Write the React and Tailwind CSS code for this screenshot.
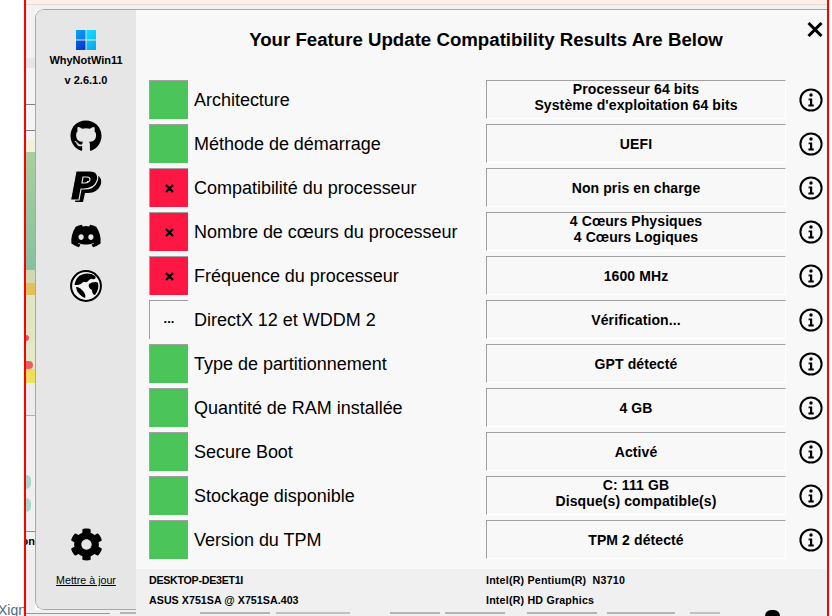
import React from 'react';
import { FaGithub, FaDiscord, FaCog } from 'react-icons/fa';

const rows = [
  { label: 'Architecture', status: 'ok', value: ['Processeur 64 bits', "Système d'exploitation 64 bits"] },
  { label: 'Méthode de démarrage', status: 'ok', value: ['UEFI'] },
  { label: 'Compatibilité du processeur', status: 'fail', value: ['Non pris en charge'] },
  { label: 'Nombre de cœurs du processeur', status: 'fail', value: ['4 Cœurs Physiques', '4 Cœurs Logiques'] },
  { label: 'Fréquence du processeur', status: 'fail', value: ['1600 MHz'] },
  { label: 'DirectX 12 et WDDM 2', status: 'wait', value: ['Vérification...'] },
  { label: 'Type de partitionnement', status: 'ok', value: ['GPT détecté'] },
  { label: 'Quantité de RAM installée', status: 'ok', value: ['4 GB'] },
  { label: 'Secure Boot', status: 'ok', value: ['Activé'] },
  { label: 'Stockage disponible', status: 'ok', value: ['C: 111 GB', 'Disque(s) compatible(s)'] },
  { label: 'Version du TPM', status: 'ok', value: ['TPM 2 détecté'] },
];

const Win11Logo = () => (
  <svg width="20" height="20" viewBox="0 0 20 20">
    <defs>
      <linearGradient id="tl" x1="0" y1="0" x2="1" y2="1">
        <stop offset="0" stopColor="#0aa0f5" />
        <stop offset="1" stopColor="#0a78e8" />
      </linearGradient>
      <linearGradient id="tr" x1="0" y1="0" x2="1" y2="1">
        <stop offset="0" stopColor="#10e0fb" />
        <stop offset="1" stopColor="#0cc0f6" />
      </linearGradient>
      <linearGradient id="bl" x1="0" y1="0" x2="1" y2="1">
        <stop offset="0" stopColor="#0a5ce0" />
        <stop offset="1" stopColor="#0038c8" />
      </linearGradient>
      <linearGradient id="br" x1="0" y1="0" x2="1" y2="1">
        <stop offset="0" stopColor="#10c8f6" />
        <stop offset="1" stopColor="#0aa0ee" />
      </linearGradient>
    </defs>
    <rect x="0" y="0" width="9.5" height="9.5" fill="url(#tl)" />
    <rect x="10.5" y="0" width="9.5" height="9.5" fill="url(#tr)" />
    <rect x="0" y="10.5" width="9.5" height="9.5" fill="url(#bl)" />
    <rect x="10.5" y="10.5" width="9.5" height="9.5" fill="url(#br)" />
  </svg>
);

const PaypalIcon = () => (
  <svg width="32" height="32" viewBox="0 0 32 32">
    <path
      fillRule="evenodd"
      d="M10 5H24C30 5 32 9 31 14C29 20 24 23 18 23H15L13 32H5ZM17 11L16 17H19C22 17 24 15 24 13C24 11.5 23 11 21 11Z"
      fill="#000"
    />
    <path
      fillRule="evenodd"
      d="M6 1H20C27 1 29 6 27 11C25 17 20 19 14 19H11L9 30H0.5ZM13 7L12 13H15C18 13 20 11 20 9.5C20 8 19 7 17 7Z"
      fill="#000"
      stroke="#e6e6e6"
      strokeWidth="1.2"
    />
  </svg>
);

const GlobeIcon = () => (
  <svg width="32" height="32" viewBox="0 0 32 32">
    <circle cx="16" cy="16" r="14.9" fill="#f4f4f4" stroke="#000" strokeWidth="2" />
    <path d="M8 7C12 3 20 2 25 6C27 8 24 10 22 9C20 8 19 11 17 12C15 13 14 11 12 13C10 15 7 15 4.5 15C5 12 6 9 8 7Z" fill="#000" />
    <path d="M6 17C9 17 11 19 13 21C15 23 16 26 15 28C12 27 9 24 7 21Z" fill="#000" />
    <path d="M19 14C22 12 26 11 28 13C29 17 28 21 25 25C23 25 22 22 22 20C20 19 18 17 19 14Z" fill="#000" />
  </svg>
);

const InfoIcon = () => (
  <svg width="24" height="24" viewBox="0 0 24 24" fill="none">
    <circle cx="12" cy="12" r="10.6" stroke="#000" strokeWidth="2" />
    <circle cx="12" cy="7" r="1.7" fill="#000" />
    <path d="M9.6 10.4H13.2V16.6H14.8V18.4H9.4V16.6H11V12.2H9.6Z" fill="#000" />
  </svg>
);

const StatusBox = ({ status }) => {
  const bg = { ok: 'bg-[#4bc55a]', fail: 'bg-[#ff1744]', wait: 'bg-[#f8f8f8]' }[status];
  return (
    <div className={`w-[39px] h-[39px] shrink-0 flex items-center justify-center border-t border-l border-[#a0a0a0] ${bg}`}>
      {status === 'fail' && (
        <svg width="9" height="9" viewBox="0 0 9 9">
          <path d="M1 1L8 8M8 1L1 8" stroke="#000" strokeWidth="2.2" />
        </svg>
      )}
      {status === 'wait' && <span className="text-[13px] font-bold leading-none pb-1">...</span>}
    </div>
  );
};

const Row = ({ label, status, value }) => (
  <div className="flex items-center h-[39px]">
    <StatusBox status={status} />
    <div className="ml-[6px] w-[292px] text-[18px] leading-none whitespace-nowrap tracking-[-0.02px]">{label}</div>
    <div className="w-[300px] h-[39px] flex flex-col items-center justify-center border-t border-l border-[#a0a0a0] border-r border-b border-r-white border-b-white text-[14px] tracking-[0.1px] leading-[16px] font-bold">
      <div className={value.length > 1 ? 'pb-[6px]' : 'pt-[1px]'}>
        {value.map((line) => (
          <div key={line} className="text-center">{line}</div>
        ))}
      </div>
    </div>
    <div className="ml-[13px]">
      <InfoIcon />
    </div>
  </div>
);

// bout de page visible derriere la fenetre, a gauche
const BackdropStrip = () => (
  <div className="w-[9px] shrink-0 flex flex-col overflow-hidden">
    <div className="h-[53px] bg-[#f1f1f1]" />
    <div className="h-[10px] bg-[#e6e6e6]" />
    <div className="h-[37px] bg-[#f4f4f4] border-b border-[#808080]" />
    <div className="h-[26px] bg-[#f4f4f4] border-b border-[#808080]" />
    <div className="h-[9px] bg-[#f4f4f4]" />
    <div className="h-[12px] bg-[#f5f0dc]" />
    <div className="h-[118px] bg-gradient-to-b from-[#a8cfa0] to-[#86c0a0]" />
    <div className="h-[13px] bg-[#cfd8b0]" />
    <div className="h-[12px] bg-[#e2c05c]" />
    <div className="h-[40px] bg-[#dfe6c4]" />
    <div className="h-[6px] bg-[#dfe6c4]">
      <div className="w-[3px] h-full rounded-r-full bg-[#e8505a]" />
    </div>
    <div className="h-[20px] bg-[#e4e8cc]" />
    <div className="h-[8px] bg-[#e4e8cc]">
      <div className="w-[7px] h-full rounded-r-full bg-[#e86060]" />
    </div>
    <div className="h-[14px] bg-[#eee05a]" />
    <div className="h-[32px] bg-[#ececec]" />
    <div className="h-[60px] bg-[#f0f0f0] border-t border-[#b0b0b0]" />
    <div className="h-[14px] bg-[#f0f0f0]">
      <div className="w-[5px] h-full rounded-r-full bg-[#a6d8cc]" />
    </div>
    <div className="h-[9px] bg-[#eeeeee]" />
    <div className="h-[14px] bg-[#f0f0f0]">
      <div className="w-[5px] h-full rounded-r-full bg-[#a6d8cc]" />
    </div>
    <div className="h-[20px] bg-[#f0f0f0] border-b border-[#909090]" />
    <div className="h-[18px] bg-[#f2f2f2] flex justify-end items-center text-[11px] font-bold leading-none">on</div>
    <div className="flex-1 bg-[#efefef]" />
  </div>
);

const Sidebar = () => (
  <div className="w-[100px] shrink-0 bg-[#e6e6e6] flex flex-col items-center rounded-l-[8px] pt-[20px] pb-[22px]">
    <Win11Logo />
    <div className="mt-[4px] text-[11px] font-bold leading-[13px]">WhyNotWin11</div>
    <div className="mt-[7px] text-[11px] font-bold leading-[13px]">v 2.6.1.0</div>
    <div className="mt-[33px] flex flex-col gap-[18px]">
      <FaGithub size={32} />
      <PaypalIcon />
      <FaDiscord size={32} />
      <GlobeIcon />
    </div>
    <div className="mt-auto">
      <FaCog size={33} />
    </div>
    <a className="mt-[13px] text-[10.67px] leading-[13px] underline">Mettre à jour</a>
  </div>
);

export default function App() {
  return (
    <div className="w-[832px] h-[616px] flex bg-white overflow-hidden text-black font-['Liberation_Sans',Arial,sans-serif]">
      <div className="w-[24px] shrink-0 flex flex-col justify-end">
        <div className="text-[14px] leading-[12px] text-[#4a6a8a] whitespace-nowrap -ml-[2px]">Xign</div>
      </div>
      <div className="w-[805px] shrink-0 flex flex-col border-x-2 border-[#ff0000]">
        <div className="h-[5px] bg-[#fdeee9] border-b border-[#e8dcd8]" />
        <div className="flex-1 flex min-h-0">
          <BackdropStrip />
          <div className="flex-1 flex flex-col min-w-0">
            <div className="h-[4px] bg-[#f1f1f1]" />
            <div className="flex-1 flex border-t border-l border-b border-[#a8a8a8] rounded-l-[9px] bg-[#f8f8f8] min-h-0">
              <Sidebar />
              <div className="flex-1 flex flex-col min-w-0">
                <div className="flex-1 pl-[13px]">
                  <div className="h-[70px] relative flex items-center justify-center pb-[10px] pr-[4px]">
                    <h1 className="text-[18.67px] font-bold leading-none whitespace-nowrap">
                      Your Feature Update Compatibility Results Are Below
                    </h1>
                    <svg className="absolute left-[658px] top-[12px]" width="16" height="15" viewBox="0 0 16 15">
                      <path d="M1.5 1L14.5 14M14.5 1L1.5 14" stroke="#000" strokeWidth="3" />
                    </svg>
                  </div>
                  <div className="flex flex-col gap-[5px]">
                    {rows.map((row) => (
                      <Row key={row.label} {...row} />
                    ))}
                  </div>
                </div>
                <div className="h-[41px] -mb-px relative shrink-0 bg-[#f0f0f0] pl-[13px] pt-[1px] flex text-[10.67px] font-bold leading-[20px]">
                  <div className="w-[337px]">
                    <div className="tracking-[-0.27px]">DESKTOP-DE3ET1I</div>
                    <div className="tracking-[0.04px]">ASUS X751SA @ X751SA.403</div>
                  </div>
                  <div className="tracking-[0.2px]">
                    <div className="whitespace-pre">Intel(R) Pentium(R)  N3710</div>
                    <div>Intel(R) HD Graphics</div>
                  </div>
                </div>
              </div>
            </div>
          </div>
        </div>
        <div className="h-[6px] shrink-0 bg-[#f0f0f0] flex items-center overflow-hidden">
          <div className="w-[84px] h-px bg-[#999999]" />
          <div className="ml-[10px] w-[16px] h-[2px] bg-[#b4b4b4]" />
          <div className="ml-[64px] w-[70px] h-[2px] bg-[#b4b4b4]" />
          <div className="ml-[6px] w-[74px] h-[2px] bg-[#c0c0c0]" />
          <div className="ml-[40px] w-[50px] h-[2px] bg-[#b4b4b4]" />
          <div className="ml-[5px] w-[60px] h-[2px] bg-[#b4b4b4]" />
          <div className="ml-[22px] w-[70px] h-[2px] bg-[#b4b4b4]" />
          <div className="ml-[10px] w-[68px] h-[2px] bg-[#b4b4b4]" />
          <div className="ml-[15px] w-[30px] h-[2px] bg-[#c0c0c0]" />
          <div className="ml-[45px] w-[15px] h-[6px] rounded-t-full bg-black shrink-0" />
        </div>
      </div>
    </div>
  );
}
